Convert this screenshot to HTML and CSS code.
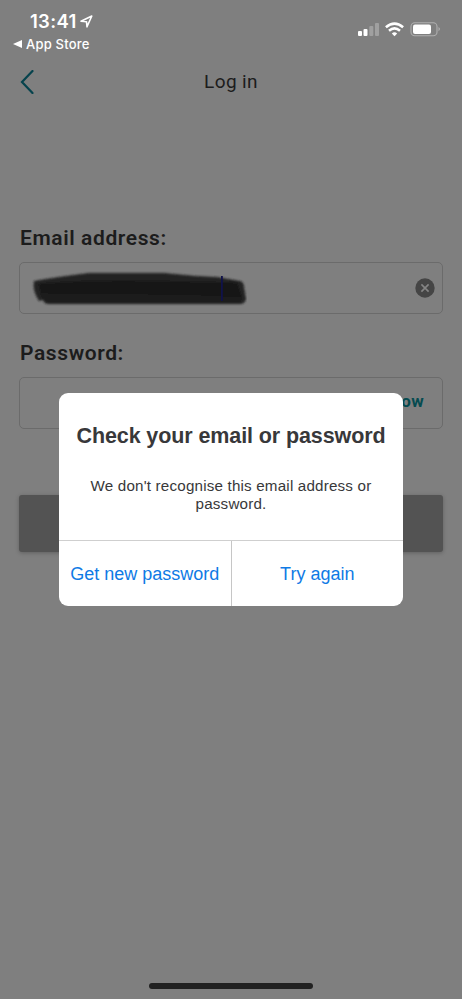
FILE: index.html
```html
<!DOCTYPE html>
<html lang="en">
<head>
<meta charset="utf-8">
<title>Log in</title>
<link rel="stylesheet" href="styles.css">
</head>
<body>
<div class="screen">
  <header class="status">
    <div class="status-left">
      <div class="clock"><span class="time">13:41</span>
        <svg class="location" width="13" height="13" viewBox="0 0 13 13"><path d="M1 6.3 11.8 1 7 11.8 6.5 6.7Z" fill="none" stroke="#fff" stroke-width="1.6" stroke-linejoin="round"/></svg>
      </div>
      <div class="return"><svg width="9" height="8" viewBox="0 0 9 8"><path d="M0 4 9 0V8Z" fill="#fff"/></svg><span>App Store</span></div>
    </div>
    <svg class="indicators" width="84" height="16" viewBox="0 0 84 16">
      <rect x="0" y="9" width="4" height="5" rx="1" fill="#fff"/>
      <rect x="5.5" y="7" width="4" height="7" rx="1" fill="#fff"/>
      <rect x="11.3" y="4" width="4" height="10" rx="1" fill="#a0a0a0"/>
      <rect x="17" y="1" width="4" height="13" rx="1" fill="#a0a0a0"/>
      <g fill="none" stroke="#fff" stroke-width="2.6"><path d="M27.9 5.2Q36.5 -2 45.1 5.2"/><path d="M31 8.7Q36.5 4.2 42 8.7"/></g>
      <path d="M33.8 11.4Q36.5 9.2 39.2 11.4L36.5 14.2Z" fill="#fff"/>
      <rect x="53" y=".8" width="26" height="13" rx="3.8" fill="none" stroke="#b0b0b0" stroke-width="1.1"/>
      <rect x="55" y="2.6" width="18" height="9.4" rx="2" fill="#fff"/>
      <path d="M80.5 5Q83.5 7 80.5 9.2Z" fill="#b0b0b0"/>
    </svg>
  </header>
  <nav class="nav">
    <svg class="back" width="14" height="24" viewBox="0 0 14 24"><path d="M12.5 1 2 12 12.5 23" fill="none" stroke="#06434d" stroke-width="2.2" stroke-linecap="round"/></svg>
    <h1>Log in</h1>
  </nav>
  <main class="form">
    <label class="label-email">Email address:</label>
    <div class="field">
      <svg class="mark" width="216" height="38" viewBox="0 0 216 38">
        <defs><filter id="soft" x="-5%" y="-10%" width="110%" height="120%"><feGaussianBlur stdDeviation=".9"/></filter></defs>
        <g filter="url(#soft)">
          <path d="M3 12Q25 8 58 4H133Q160 7 186 8L209 12Q213 13 213 18L215 30Q214 35 209 35H18Q13 35 12 31L8 32Q1 21 3 12Z" fill="#222"/>
          <path d="M8 15Q60 11 114 12T206 14L211 29Q190 27 150 26T10 25Z" fill="#131313"/>
          <path d="M9 26Q110 24 211 28L210 34H15Z" fill="#1e1e1e"/>
        </g>
        <rect x="190" y="7" width="1.8" height="25" fill="#10124a"/>
      </svg>
      <svg class="clear" width="20" height="20" viewBox="0 0 20 20"><circle cx="10" cy="10" r="9.7" fill="#454545"/><path d="M6.4 6.4 13.6 13.6M13.6 6.4 6.4 13.6" stroke="#858585" stroke-width="1.6"/></svg>
    </div>
    <label class="label-password">Password:</label>
    <div class="field field-password"><span class="show">Show</span></div>
    <div class="submit"></div>
  </main>
  <div class="home"></div>
  <section class="dialog">
    <div class="message">
      <h2>Check your email or password</h2>
      <p>We don't recognise this email address or<br>password.</p>
    </div>
    <div class="actions"><div class="action first"><span>Get new password</span></div><div class="action second"><span>Try again</span></div></div>
  </section>
</div>
</body>
</html>
```
FILE: styles.css
```css
* { box-sizing: border-box; }
body { margin: 0; }
.screen {
  position: relative;
  width: 462px;
  height: 999px;
  overflow: hidden;
  display: flex;
  flex-direction: column;
  background: #7f7f7f;
  font-family: Roboto, sans-serif;
  color: #1c1c1c;
}
.status {
  height: 58px;
  flex: none;
  display: flex;
  justify-content: space-between;
  align-items: flex-start;
  padding: 11px 20px 0 13px;
  color: #fff;
  font-family: Inter, sans-serif;
}
.clock { display: flex; align-items: center; height: 20px; padding-left: 17px; gap: 3px; }
.time { font-size: 18.5px; font-weight: 600; line-height: 20px; letter-spacing: .3px; }
.return { display: flex; align-items: center; gap: 4px; height: 16px; margin-top: 5px; font-size: 13px; font-weight: 500; letter-spacing: .2px; }
.indicators { margin: 11px 0 0; }
.nav { height: 48px; flex: none; display: flex; align-items: center; padding-left: 20px; }
.back { margin-right: -14px; }
h1 { flex: 1; margin: -2px 20px 0 0; text-align: center; font-size: 19px; font-weight: 400; letter-spacing: .4px; }
.form { padding: 120px 19px 0; display: flex; flex-direction: column; }
.form label { height: 24px; line-height: 25px; padding-left: 1px; font-size: 21px; font-weight: 600; letter-spacing: .6px; }
.field {
  height: 52px;
  margin-top: 12px;
  border: 1.5px solid #6b6b6b;
  border-radius: 5px;
  display: flex;
  align-items: center;
  justify-content: space-between;
  padding: 0 7px 0 11px;
}
.form .label-password { margin-top: 27px; }
.field-password { justify-content: flex-end; padding-right: 18px; }
.show { color: #064b50; font-size: 17px; font-weight: 700; letter-spacing: .3px; margin-top: -5px; }
.submit { height: 57px; margin-top: 66px; border-radius: 3px; background: #535353; box-shadow: 0 1px 4px rgba(0, 0, 0, .25); }
.home { width: 164px; height: 6px; margin: auto auto 10px; border-radius: 3px; background: #222; }
.dialog {
  position: absolute;
  left: 59px;
  top: 393px;
  width: 344px;
  height: 213px;
  border-radius: 9px;
  background: #fff;
  overflow: hidden;
  display: flex;
  flex-direction: column;
  font-family: "Liberation Sans", Arial, sans-serif;
  color: #38383a;
  text-align: center;
}
.message { height: 147px; padding-top: 30px; }
h2 { margin: 0; font-size: 21.5px; line-height: 26px; font-weight: 700; letter-spacing: -.1px; white-space: nowrap; }
p { margin: 28px 0 0; font-size: 15.2px; line-height: 18px; letter-spacing: .18px; }
.actions { height: 66px; display: flex; border-top: 1px solid #cfcfcf; }
.action { flex: 1; display: flex; align-items: center; justify-content: center; padding-top: 1px; font-size: 18px; color: #0f7ae5; }
.first { border-right: 1px solid #c6c6c6; }
```
